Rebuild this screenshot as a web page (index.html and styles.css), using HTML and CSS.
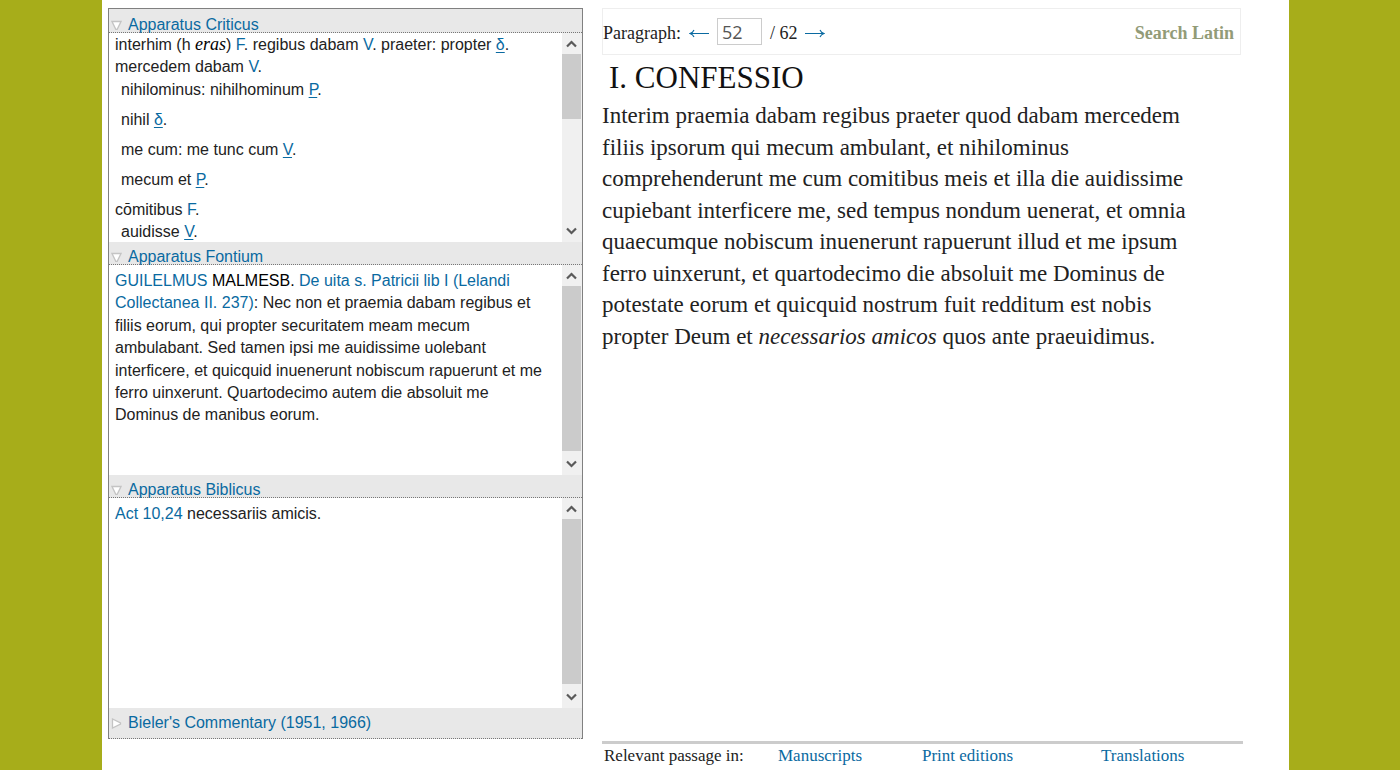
FILE: index.html
```html
<!DOCTYPE html>
<html lang="en">
<head>
<meta charset="utf-8">
<title>Confessio - Paragraph 52</title>
<link rel="stylesheet" href="styles.css">
</head>
<body>
<svg class="symbols" aria-hidden="true">
  <symbol id="up" viewBox="0 0 11 8"><path d="M1 6.500L5.500 2L10 6.500" fill="none" stroke="#5a5a5a" stroke-width="2.200"/></symbol>
  <symbol id="down" viewBox="0 0 11 8"><path d="M1 1.500L5.500 6L10 1.500" fill="none" stroke="#5a5a5a" stroke-width="2.200"/></symbol>
  <symbol id="open" viewBox="0 0 11 10"><path d="M1 1H10L6.200 8.800H4.800Z" fill="#fff" stroke="#c4c4c4" stroke-width="1.300"/></symbol>
  <symbol id="closed" viewBox="0 0 11 11"><path d="M1.500 1V10L9.500 6.200V4.800Z" fill="#fff" stroke="#c4c4c4" stroke-width="1.300"/></symbol>
</svg>
<div class="page">
  <main class="sheet">
    <div class="apparatus">
      <h2 class="bar bar-first"><a href="#criticus"><svg class="marker"><use href="#open"/></svg>Apparatus Criticus</a></h2>
      <section class="pane pane-critical" id="criticus">
        <div class="notes">
          <p>interhim (h <i>eras</i>) <a href="#F">F</a>. regibus dabam <a href="#V">V</a>. praeter: propter <a class="siglum" href="#d">δ</a>.</p>
          <p>mercedem dabam <a href="#V">V</a>.</p>
          <p class="variant">nihilominus: nihilhominum <a class="siglum" href="#P">P</a>.</p>
          <p class="variant">nihil <a class="siglum" href="#d">δ</a>.</p>
          <p class="variant">me cum: me tunc cum <a class="siglum" href="#V">V</a>.</p>
          <p class="variant">mecum et <a class="siglum" href="#P">P</a>.</p>
          <p>cōmitibus <a href="#F">F</a>.</p>
          <p class="variant">auidisse <a class="siglum" href="#V">V</a>.</p>
        </div>
        <div class="scroll"><button class="step-up" aria-label="Scroll up"><svg><use href="#up"/></svg></button><div class="track"><div class="thumb thumb-short"></div></div><button class="step-down" aria-label="Scroll down"><svg><use href="#down"/></svg></button></div>
      </section>
      <h2 class="bar"><a href="#fontium"><svg class="marker"><use href="#open"/></svg>Apparatus Fontium</a></h2>
      <section class="pane" id="fontium">
        <div class="notes">
          <p><a href="#author">GUILELMUS</a> <span class="author">MALMESB.</span> <a href="#source">De uita s. Patricii lib I (Lelandi Collectanea II. 237)</a>: Nec non et praemia dabam regibus et filiis eorum, qui propter securitatem meam mecum ambulabant. Sed tamen ipsi me auidissime uolebant interficere, et quicquid inuenerunt nobiscum rapuerunt et me ferro uinxerunt. Quartodecimo autem die absoluit me Dominus de manibus eorum.</p>
        </div>
        <div class="scroll"><button class="step-up" aria-label="Scroll up"><svg><use href="#up"/></svg></button><div class="track"><div class="thumb"></div></div><button class="step-down" aria-label="Scroll down"><svg><use href="#down"/></svg></button></div>
      </section>
      <h2 class="bar"><a href="#biblicus"><svg class="marker"><use href="#open"/></svg>Apparatus Biblicus</a></h2>
      <section class="pane" id="biblicus">
        <div class="notes">
          <p><a href="#act">Act 10,24</a> necessariis amicis.</p>
        </div>
        <div class="scroll"><button class="step-up" aria-label="Scroll up"><svg><use href="#up"/></svg></button><div class="track"><div class="thumb"></div></div><button class="step-down" aria-label="Scroll down"><svg><use href="#down"/></svg></button></div>
      </section>
      <h2 class="bar bar-last"><a href="#commentary"><svg class="marker"><use href="#closed"/></svg>Bieler's Commentary (1951, 1966)</a></h2>
    </div>
    <div class="reader">
      <div class="toolbar">
        <label for="para">Paragraph:</label>
        <a class="arrow" href="#51" aria-label="Previous paragraph"><svg viewBox="0 0 20 9"><path d="M1 4.500H20M5 1Q4 3.500 1 4.500Q4 5.500 5 8" fill="none" stroke="#0a6aa1" stroke-width="1.100"/></svg></a>
        <input id="para" type="text" value="52">
        <span class="total">/ 62</span>
        <a class="arrow" href="#53" aria-label="Next paragraph"><svg viewBox="0 0 20 9"><path d="M0 4.500H19M15 1Q16 3.500 19 4.500Q16 5.500 15 8" fill="none" stroke="#0a6aa1" stroke-width="1.100"/></svg></a>
        <a class="search" href="#search">Search Latin</a>
      </div>
      <h1>I. CONFESSIO</h1>
      <p class="latin">Interim praemia dabam regibus praeter quod dabam mercedem<br>filiis ipsorum qui mecum ambulant, et nihilominus<br>comprehenderunt me cum comitibus meis et illa die auidissime<br>cupiebant interficere me, sed tempus nondum uenerat, et omnia<br>quaecumque nobiscum inuenerunt rapuerunt illud et me ipsum<br>ferro uinxerunt, et quartodecimo die absoluit me Dominus de<br>potestate eorum et quicquid nostrum fuit redditum est nobis<br>propter Deum et <i>necessarios amicos</i> quos ante praeuidimus.</p>
      <footer class="passages">
        <span>Relevant passage in:</span>
        <a href="#manuscripts">Manuscripts</a>
        <a href="#editions">Print editions</a>
        <a href="#translations">Translations</a>
      </footer>
    </div>
  </main>
</div>
</body>
</html>
```
FILE: styles.css
```css
* { box-sizing: border-box; }
body {
  margin: 0;
  background: #a7ad1a;
  color: #222;
  font-family: Georgia, "Liberation Serif", serif;
}
a { color: #0a6aa1; text-decoration: none; }
p, h1, h2 { margin: 0; font-weight: normal; }
.symbols { display: none; }

.page {
  display: grid;
  grid-template-columns: 102fr 1187fr 111fr;
  min-height: 100vh;
}
.sheet {
  grid-column: 2;
  display: grid;
  grid-template-columns: 475fr 641fr;
  gap: 19px;
  padding: 8px 46px 0 6px;
  background: #fff;
}

.apparatus {
  align-self: start;
  border: 1px solid #808080;
  border-bottom: 0;
  font-family: Arial, "Liberation Sans", sans-serif;
}
.bar {
  display: flex;
  align-items: flex-end;
  height: 23px;
  padding-left: 2px;
  background: #e8e8e8;
  border-bottom: 1px dotted #777;
  font-size: 16px;
  line-height: 14px;
}
.bar-first { height: 24px; }
.bar-last { height: 31px; align-items: center; }
.bar a { display: flex; align-items: center; }
.marker { width: 11px; height: 11px; margin-right: 6px; }
.pane { display: flex; height: 210px; overflow: hidden; }
.notes {
  flex: 1;
  padding: 5px 12px 0 6px;
  font-size: 16px;
  line-height: 1.4;
}
.pane-critical { height: 209px; }
.pane-critical .notes { padding-top: 1px; padding-right: 0; }
.notes i { font-family: "Liberation Serif", serif; font-size: 18px; line-height: 1; color: #000; }
.author { color: #000; }
.variant { padding: 0 0 8px 6px; line-height: 22px; }
.siglum { text-decoration: underline; text-underline-offset: 2px; }
.scroll { display: flex; flex-direction: column; width: 20px; background: #f0f0f0; }
.scroll button {
  display: flex;
  align-items: center;
  justify-content: center;
  width: 19px;
  height: 21px;
  padding: 0;
  border: 0;
  background: none;
}
.scroll .step-down { height: 24px; padding-top: 2px; }
.scroll svg { width: 11px; height: 8px; }
.track { flex: 1; }
.thumb { width: 19px; height: 100%; background: #cbcbcb; }
.thumb-short { height: 65px; }

.reader { display: flex; flex-direction: column; }
.toolbar {
  display: flex;
  align-items: center;
  height: 47px;
  margin-right: 2px;
  padding: 3px 6px 0 0;
  border: 1px solid #eee;
  font-size: 18px;
}
.arrow { display: flex; margin: 0 0 0 8px; }
.arrow svg { width: 20px; height: 9px; }
.toolbar input {
  width: 45px;
  height: 27px;
  margin: 0 8px 3px;
  padding: 0 4px;
  border: 1px solid #ccc;
  color: #555;
  font: 18px "Open Sans", sans-serif;
}
.search { margin-left: auto; color: #929b77; font-weight: bold; }
h1 { padding: 5px 0 0 7px; font-size: 31px; line-height: 36px; color: #111; }
.latin { padding-top: 4px; font-size: 23px; line-height: 1.37; }
.passages {
  display: grid;
  grid-template-columns: 174fr 144fr 179fr 142fr;
  margin-top: auto;
  padding: 2px 0 4px 2px;
  border-top: 3px solid #ccc;
  font-size: 17px;
  line-height: 20px;
}
```
